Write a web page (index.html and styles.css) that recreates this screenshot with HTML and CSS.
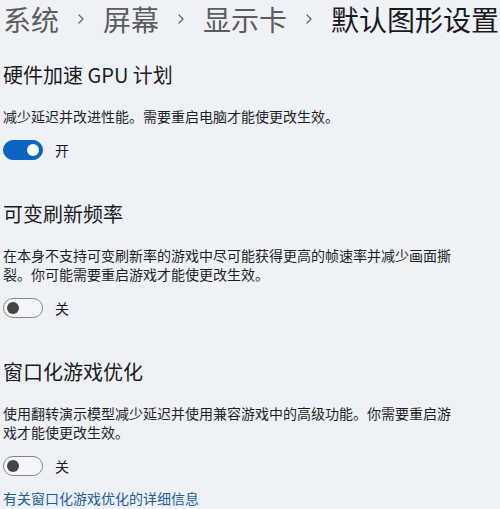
FILE: index.html
```html
<!DOCTYPE html>
<html lang="zh-CN">
<head>
    <meta charset="UTF-8">
    <meta name="viewport" content="width=device-width, initial-scale=1.0">
    <title>默认图形设置</title>
    <link rel="stylesheet" href="styles.css">
</head>
<body>

    <!-- 路径导航 -->
    <nav class="breadcrumb">
        <span class="crumb">系统</span>
        <svg class="chevron" width="6" height="10" viewBox="0 0 6 10"><path d="M1 1 L5 5 L1 9" fill="none" stroke="#6a6a6a" stroke-width="1.3" stroke-linecap="round" stroke-linejoin="round"/></svg>
        <span class="crumb">屏幕</span>
        <svg class="chevron" width="6" height="10" viewBox="0 0 6 10"><path d="M1 1 L5 5 L1 9" fill="none" stroke="#6a6a6a" stroke-width="1.3" stroke-linecap="round" stroke-linejoin="round"/></svg>
        <span class="crumb">显示卡</span>
        <svg class="chevron" width="6" height="10" viewBox="0 0 6 10"><path d="M1 1 L5 5 L1 9" fill="none" stroke="#6a6a6a" stroke-width="1.3" stroke-linecap="round" stroke-linejoin="round"/></svg>
        <span class="crumb current">默认图形设置</span>
    </nav>

    <section class="setting">
        <h2>硬件加速 GPU 计划</h2>
        <p class="desc">减少延迟并改进性能。需要重启电脑才能使更改生效。</p>
        <div class="toggle-row">
            <span class="toggle on"><span class="knob"></span></span>
            <span class="toggle-label">开</span>
        </div>
    </section>

    <section class="setting">
        <h2>可变刷新频率</h2>
        <p class="desc">在本身不支持可变刷新率的游戏中尽可能获得更高的帧速率并减少画面撕裂。你可能需要重启游戏才能使更改生效。</p>
        <div class="toggle-row">
            <span class="toggle"><span class="knob"></span></span>
            <span class="toggle-label">关</span>
        </div>
    </section>

    <section class="setting">
        <h2>窗口化游戏优化</h2>
        <p class="desc">使用翻转演示模型减少延迟并使用兼容游戏中的高级功能。你需要重启游戏才能使更改生效。</p>
        <div class="toggle-row">
            <span class="toggle"><span class="knob"></span></span>
            <span class="toggle-label">关</span>
        </div>
        <a class="more-link" href="#">有关窗口化游戏优化的详细信息</a>
    </section>

</body>
</html>
```

FILE: styles.css
```css
body {
    margin: 0;
    padding: 1px 0 0 3px;
    background-color: #eef2f7;
    font-family: "Noto Sans CJK SC", "Noto Sans", sans-serif;
    color: #1b1b1b;
    overflow: hidden;
}

/* 路径导航 */
.breadcrumb {
    display: flex;
    align-items: center;
    gap: 19px;
    height: 36px;
    white-space: nowrap;
}

.crumb {
    font-size: 28px;
    line-height: 36px;
    color: #5c5c5c;
}

.crumb.current {
    color: #1a1a1a;
}

.chevron {
    flex: none;
}

/* 设置项 */
.setting {
    margin-top: 24px;
}

.setting + .setting {
    margin-top: 40px;
}

.setting h2 {
    margin: 0;
    font-size: 20px;
    font-weight: normal;
    line-height: 28px;
}

.desc {
    margin: 18px 0 0;
    font-size: 14px;
    line-height: 19px;
    max-width: 460px;
    color: #1f1f1f;
}

.toggle-row {
    display: flex;
    align-items: center;
    gap: 12px;
    margin-top: 14px;
    height: 20px;
}

.toggle {
    box-sizing: border-box;
    width: 40px;
    height: 20px;
    border-radius: 10px;
    border: 1px solid #858585;
    background-color: #f4f6f9;
    display: flex;
    align-items: center;
    padding: 0 3px;
}

.toggle .knob {
    width: 12px;
    height: 12px;
    border-radius: 50%;
    background-color: #454545;
}

.toggle.on {
    background-color: #0a64c2;
    border-color: #0a64c2;
    justify-content: flex-end;
}

.toggle.on .knob {
    background-color: #ffffff;
}

.toggle-label {
    font-size: 14px;
    line-height: 20px;
}

.more-link {
    display: block;
    margin-top: 13px;
    font-size: 14px;
    line-height: 19px;
    color: #245b93;
    text-decoration: none;
}
```
